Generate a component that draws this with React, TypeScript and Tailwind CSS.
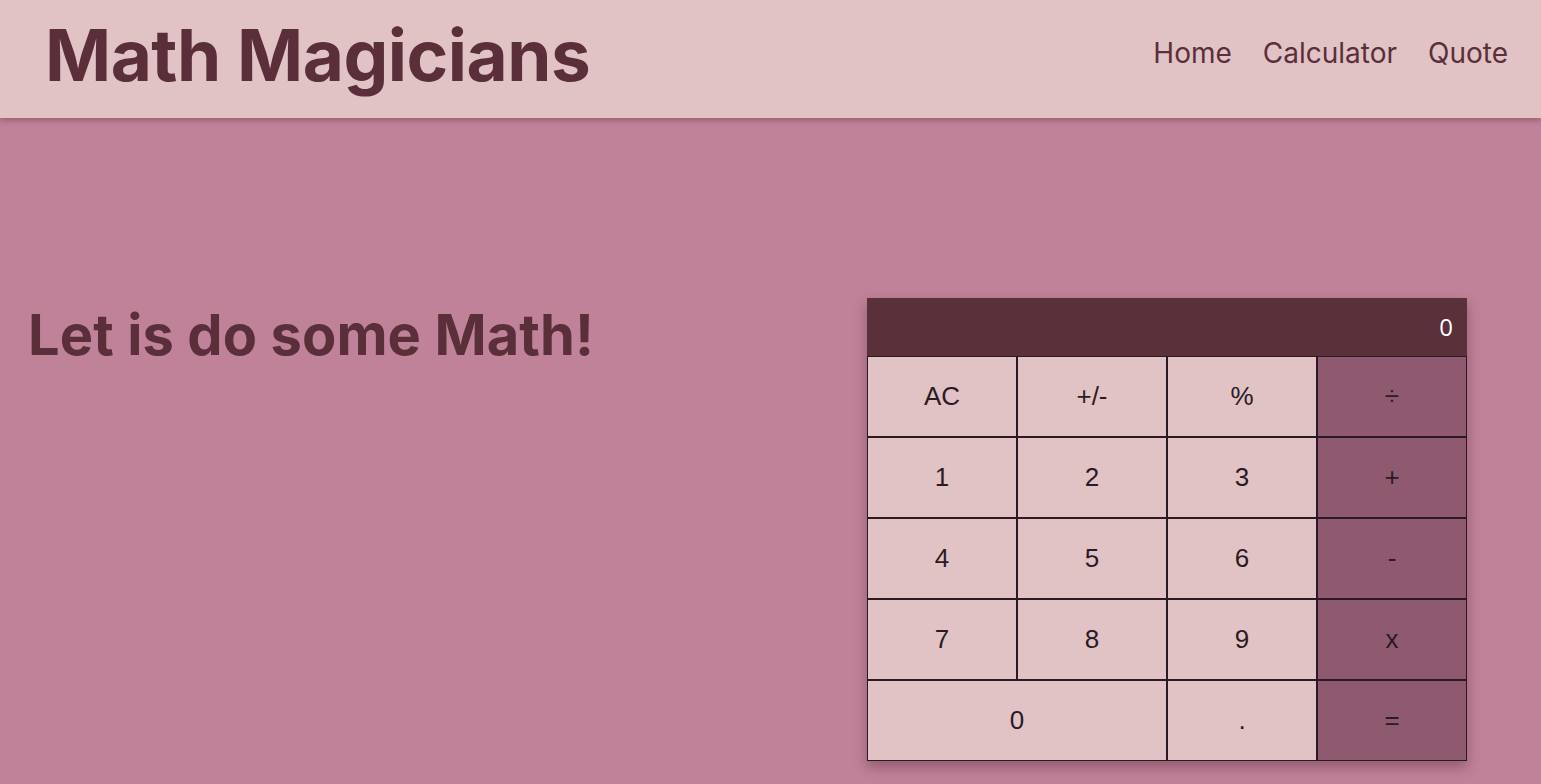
import React from "react";

const keys: { label: string; op?: boolean; span?: boolean }[] = [
  { label: "AC" },
  { label: "+/-" },
  { label: "%" },
  { label: "÷", op: true },
  { label: "1" },
  { label: "2" },
  { label: "3" },
  { label: "+", op: true },
  { label: "4" },
  { label: "5" },
  { label: "6" },
  { label: "-", op: true },
  { label: "7" },
  { label: "8" },
  { label: "9" },
  { label: "x", op: true },
  { label: "0", span: true },
  { label: "." },
  { label: "=", op: true },
];

export default function App() {
  return (
    <div className="min-h-[784px] w-full bg-[#bf8299] font-['Inter',sans-serif] text-[#5a2f3a]">
      <header className="relative z-10 flex h-[118px] items-center justify-between bg-[#e1c3c5] pl-[45px] pr-[33px] shadow-[0_2px_6px_rgba(90,40,60,0.45)]">
        <h1 className="text-[71px] font-bold leading-none tracking-[-0.5px] pb-[8px]">Math Magicians</h1>
        <nav className="flex gap-[31px] pb-[12px] text-[28px] leading-none">
          <a>Home</a>
          <a>Calculator</a>
          <a>Quote</a>
        </nav>
      </header>
      <main className="flex items-start justify-between pl-[28px] pr-[74px] pt-[180px]">
        <h2 className="mt-[9px] text-[56px] font-bold leading-none tracking-[0.1px]">Let is do some Math!</h2>
        <div className="w-[600px] shadow-[0_6px_12px_rgba(80,30,50,0.4)] font-['Liberation_Sans',Arial,sans-serif] text-[#2b1a24]">
          <div className="flex h-[58px] items-center justify-end bg-[#5a303a] pr-[14px] font-['Open_Sans',sans-serif] text-[24px] leading-none text-white">0</div>
          <div className="grid grid-cols-4">
            {keys.map((k) => (
              <div
                key={k.label}
                className={`flex h-[81px] items-center justify-center border border-[#2b1a24] text-[26px] ${
                  k.op ? "bg-[#8f5a6f]" : "bg-[#e1c3c5]"
                } ${k.span ? "col-span-2" : ""}`}
              >
                {k.label}
              </div>
            ))}
          </div>
        </div>
      </main>
    </div>
  );
}
